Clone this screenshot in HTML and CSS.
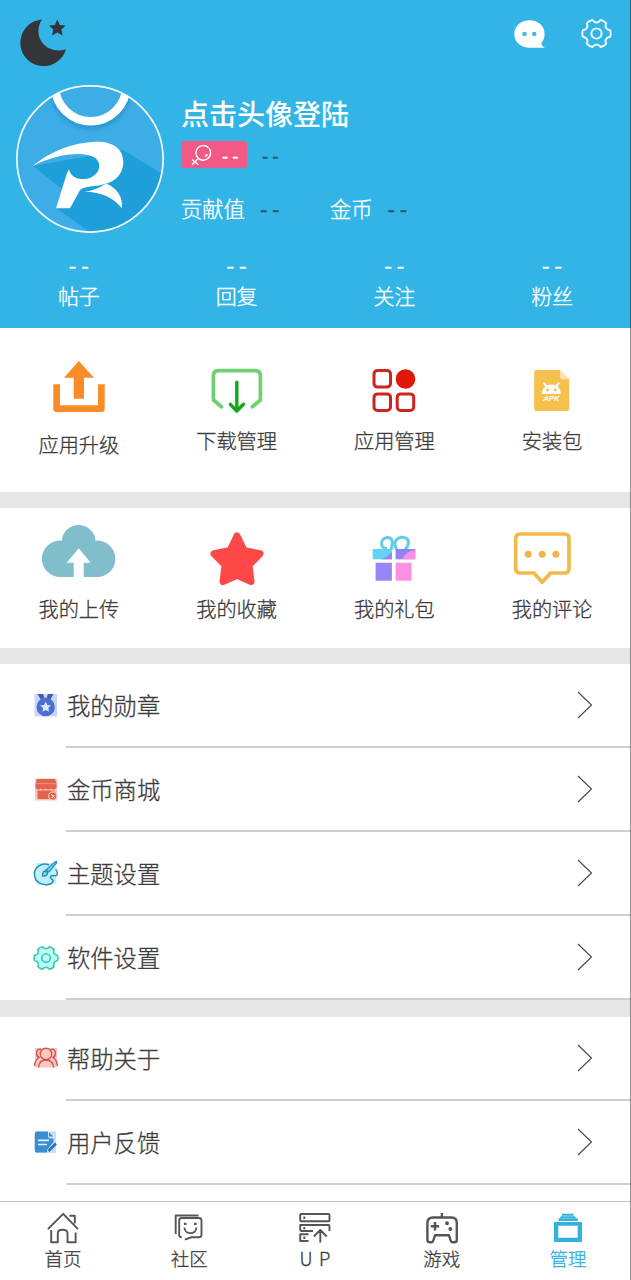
FILE: index.html
```html
<!DOCTYPE html>
<html lang="zh-CN">
<head>
<meta charset="utf-8">
<title>管理</title>
<link rel="stylesheet" href="styles.css">
</head>
<body>
<svg class="defs" width="0" height="0">
  <symbol id="gear" viewBox="-16 -16 32 32">
    <path d="M14.1 -3.3Q15.2 0 14.1 3.3Q7.8 4.5 9.9 10.6Q7.6 13.2 4.2 13.9Q0 9 -4.2 13.9Q-7.6 13.2 -9.9 10.6Q-7.8 4.5 -14.1 3.3Q-15.2 0 -14.1 -3.3Q-7.8 -4.5 -9.9 -10.6Q-7.6 -13.2 -4.2 -13.9Q0 -9 4.2 -13.9Q7.6 -13.2 9.9 -10.6Q7.8 -4.5 14.1 -3.3Z"/>
    <circle r="5.3"/>
  </symbol>
  <symbol id="chevron" viewBox="0 0 16 28">
    <path d="M1 1L14.5 14L1 27" fill="none" stroke="#444" stroke-width="1.1"/>
  </symbol>
</svg>
<div class="screen">
  <header class="header">
    <div class="topbar">
      <svg class="moon" width="48" height="50" viewBox="0 0 48 50" fill="#333538">
        <path d="M21 1.5A23.3 23.3 0 1 0 45 31.2C35 34.5 24 31 19.3 21.5C16.2 15 17 7.5 21 1.5Z"/>
        <path d="M36.3 1.5L38.8 7L44.7 7.6L40.3 11.6L41.7 17.4L36.3 14.5L31 17.4L32.3 11.6L28 7.6L33.8 7Z"/>
      </svg>
      <svg class="chat" width="32" height="30" viewBox="0 0 32 30">
        <path d="M15.5 .3C24 .3 30.6 6 30.6 13.8C30.6 18 29.2 21 27.2 23.2Q27.8 26.2 30.8 27.8H15.5C7 27.8.3 22 .3 14S7 .3 15.5.3Z" fill="#fff"/>
        <circle cx="10.5" cy="14" r="2.3" fill="#4bb5df"/><circle cx="20.3" cy="14" r="2.3" fill="#4bb5df"/>
      </svg>
      <svg class="settings" width="31" height="31"><use href="#gear"/></svg>
    </div>
    <div class="profile">
      <svg class="avatar" width="148" height="148" viewBox="0 0 148 148">
        <defs><clipPath id="round"><circle cx="74" cy="74" r="73"/></clipPath>
        <filter id="soft"><feGaussianBlur stdDeviation="1.5"/></filter></defs>
        <g clip-path="url(#round)">
          <path d="M0 0H148V148H0Z" fill="#3cade6"/>
          <path d="M17 81L46 104L40 123L78 150H150V91L107 65Z" fill="#1e9fd9"/>
          <circle cx="74.7" cy="4" r="37" fill="none" stroke="#258fca" stroke-width="8" opacity=".6" filter="url(#soft)"/>
          <circle cx="74.7" cy=".5" r="35.7" fill="#3cade6" stroke="#fff" stroke-width="8.4"/>
          <path d="M16.7 81C34 66 58 57.5 79 56.8C97 56 107 64 107.3 76C107.5 90 98 97 89 98.8C78 103 66 100 63 107L54 123.3H40L50.7 89L53 84.3C55 94 66 96 75 92.5C84 88 86 79 79.5 73C67 65 38 70 16.7 81Z" fill="#fff"/>
          <path d="M69 106.7Q80 105.5 90 98.6C101 103 107 112 106 123.3C97 112 85 107 69 106.7Z" fill="#fff"/>
        </g>
        <circle cx="74" cy="74" r="73.1" fill="none" stroke="#f4fcff" stroke-width="1.7"/>
      </svg>
      <div class="info">
        <div class="name">点击头像登陆</div>
        <div class="tags">
          <span class="badge">
            <svg width="22" height="22" viewBox="0 0 22 22" fill="none" stroke="#fff" stroke-width="1.4">
              <path d="M17.5 3.8A7.3 7.3 0 1 0 19.5 8.2M7.3 14.5L1 20.7M1 15.5L7.3 20.7M14 12.4Q16 11.5 16.3 10M18 4.2Q19.6 6 19.5 8.8"/>
            </svg>
            <span>- -</span>
          </span>
          <span class="level">- -</span>
        </div>
        <div class="wealth">
          <div class="contrib">贡献值<span class="value">- -</span></div>
          <div>金币<span class="value">- -</span></div>
        </div>
      </div>
    </div>
    <div class="stats">
      <div><b>- -</b>帖子</div><div><b>- -</b>回复</div><div><b>- -</b>关注</div><div><b>- -</b>粉丝</div>
    </div>
  </header>

  <section class="tiles tools">
    <div class="tile upgrade">
      <svg width="72" height="60" viewBox="0 0 72 60" fill="#fa8c28"><path d="M35.8 3L51 19.7H41V40.7H30.7V19.7H21ZM10.3 26.3H17V47.3H55V26.3H61.7V51Q61.7 54 58.7 54H13.3Q10.3 54 10.3 51Z"/></svg>
      <span>应用升级</span>
    </div>
    <div class="tile">
      <svg width="72" height="60" viewBox="0 0 72 60" fill="none" stroke-linecap="round" stroke-linejoin="round"><path d="M20.5 48.7L12.4 42V18Q12.4 12.7 17.7 12.7H54Q59.4 12.7 59.4 18V42L51.3 48.7" stroke="#6fcf73" stroke-width="3.7"/><path d="M35.8 24.3V52.5M29.4 46.3L35.8 53L42.4 46.3" stroke="#12a81c" stroke-width="3.4"/></svg>
      <span>下载管理</span>
    </div>
    <div class="tile">
      <svg width="72" height="60" viewBox="0 0 72 60" fill="none" stroke="#cc241e" stroke-width="3"><rect x="16" y="12.6" width="16.5" height="16.5" rx="3.5"/><rect x="16" y="35.9" width="16.5" height="16.5" rx="3.5"/><rect x="39.2" y="35.9" width="16.5" height="16.5" rx="3.5"/><circle cx="47.5" cy="21" r="9.8" fill="#e01808" stroke="none"/></svg>
      <span>应用管理</span>
    </div>
    <div class="tile">
      <svg width="72" height="60" viewBox="0 0 72 60"><path d="M20.2 12H44L53.2 21.3V51Q53.2 53 51.2 53H20.2Q18.2 53 18.2 51V14Q18.2 12 20.2 12Z" fill="#f6c04e"/><path d="M44 12L53.2 21.3H46Q44 21.3 44 19.3Z" fill="#fbe3ae"/><path d="M26 36Q26 31 29.3 28.7L26.8 25L28.2 24.3L31.2 27.2Q35.5 25.6 39.5 27.2L42.6 24.3L44 25L41.5 28.7Q44.8 31 44.8 36Z" fill="#fff"/><circle cx="31.5" cy="32" r="1.4" fill="#f6c04e"/><circle cx="39.3" cy="32" r="1.4" fill="#f6c04e"/><text class="apk" x="35.4" y="43" text-anchor="middle">APK</text></svg>
      <span>安装包</span>
    </div>
  </section>

  <section class="tiles mine">
    <div class="tile">
      <svg width="72" height="60" viewBox="0 0 72 60"><path d="M18 54A18.2 18.2 0 1 1 18.8 17.7A16.9 16.9 0 0 1 52.5 17.7A18.2 18.2 0 1 1 53.3 54H40.7V39.7H47.7L35.7 25.3L23.7 39.7H30.7V54Z" fill="#7fbeca"/></svg>
      <span>我的上传</span>
    </div>
    <div class="tile">
      <svg width="72" height="60" viewBox="0 0 72 60"><path d="M36 13L43 27.5L59 30.8L48 42L50 58.5L36 52.3L22 58.5L24 42L13 30.8L29 27.5Z" fill="#ff4848" stroke="#ff4848" stroke-width="7" stroke-linejoin="round"/></svg>
      <span>我的收藏</span>
    </div>
    <div class="tile">
      <svg width="72" height="60" viewBox="0 0 72 60"><g fill="none" stroke="#62cbe8" stroke-width="3"><path d="M33 26.5Q37 14 29 14.5C21.5 15.5 22 26 29 25.6"/><path d="M38.6 26.5C34 18 40 14 44.8 14.2C53 15 51 23 46.5 27"/></g><path d="M14.6 26H33.9V36.3H14.6Z" fill="#5fd5f3"/><path d="M22.5 36.3Q30 34 33.9 29V36.3Z" fill="#9a84f4"/><path d="M37.6 26H57.3V36.3H37.6Z" fill="#9181f2"/><path d="M57.3 27V36.3H44Q48 28 57.3 27Z" fill="#fa91df"/><path d="M17.6 39.7H33.9V57.7H17.6Z" fill="#9885f8"/><path d="M37.6 39.7H53.6V57.7H37.6Z" fill="#fa91e3"/></svg>
      <span>我的礼包</span>
    </div>
    <div class="tile">
      <svg width="72" height="60" viewBox="0 0 72 60"><path d="M4.3 11H48.5Q53 11 53 15.5V45.5Q53 50 48.5 50H34.5L26.2 59.3L18 50H4.3Q-.3 50-.3 45.5V15.5Q-.3 11 4.3 11Z" fill="none" stroke="#f1bb49" stroke-width="3.7" stroke-linejoin="round"/><g fill="#efb548"><circle cx="12.2" cy="31.2" r="3.5"/><circle cx="26.2" cy="31.2" r="3.5"/><circle cx="39.9" cy="31.2" r="3.5"/></g></svg>
      <span>我的评论</span>
    </div>
  </section>

  <section class="list">
    <div class="row">
      <svg class="row-icon" width="24" height="24" viewBox="0 0 24 24"><path d="M.5 0H23V22.5H.5Z" fill="#c5d7fb"/><path d="M3.5 0H9L10.5 4L7 6ZM14 0H19.5L16 6L12.5 4Z" fill="#445da8"/><circle cx="11.7" cy="13" r="9.2" fill="#4b6ed3"/><path d="M11.7 7.5L13.3 11L17 11.5L14.3 14L15 17.7L11.7 16L8.4 17.7L9.1 14L6.4 11.5L10.1 11Z" fill="#dce7ff"/></svg>
      <div class="row-body">我的勋章<svg width="16" height="28"><use href="#chevron"/></svg></div>
    </div>
    <div class="row">
      <svg class="row-icon" width="24" height="24" viewBox="0 0 24 24"><path d="M1 .5H23V22.5H1Z" fill="#fac7bd"/><path d="M3 1H21L22.5 5.5V10Q20 12.5 17 10.5Q14 12.5 11.7 10.5Q9 12.5 6.5 10.5Q3.5 12.5 1.5 10V5.5ZM3.5 12.3Q7 13 9 12.3Q12 13 14 12.3Q18 13 20.5 12.3V21H3.5Z" fill="#e5624f"/><path d="M2 5.7H22" stroke="#f09d8e" stroke-width=".8"/><circle cx="18.8" cy="18" r="4.1" fill="#e5624f" stroke="#ffd5cd"/><path d="M17.3 16.2L20.5 19.6M20.5 17L18 20" stroke="#fff0ed" fill="none"/></svg>
      <div class="row-body">金币商城<svg width="16" height="28"><use href="#chevron"/></svg></div>
    </div>
    <div class="row">
      <svg class="row-icon" width="24" height="24" viewBox="0 0 24 24"><path d="M2 1H19L22 5V21L17 23H4L1 19Z" fill="#bdefff"/><path d="M15 3C8 0 0 5 .5 12.5C.5 20 8 23.5 14 22.5C20 21.5 20 18 17.5 17C15 15 17.5 13 20 13.7C24 14.5 24 11 21.8 7" fill="none" stroke="#278eb8" stroke-width="1.5"/><path d="M12 8L21.5-.5Q23-1 22.5 1L15 10ZM11.5 9Q8.5 9 8.5 14Q13 14.5 13.7 11Z" fill="#78d6ed" stroke="#278eb8" stroke-width="1.3"/></svg>
      <div class="row-body">主题设置<svg width="16" height="28"><use href="#chevron"/></svg></div>
    </div>
    <div class="row">
      <svg class="row-icon theme-gear" width="26" height="26"><use href="#gear"/></svg>
      <div class="row-body">软件设置<svg width="16" height="28"><use href="#chevron"/></svg></div>
    </div>
  </section>

  <section class="list help">
    <div class="row">
      <svg class="row-icon" width="24" height="24" viewBox="0 0 24 24"><path d="M1 1H23V20.5H1Z" fill="#fac7c3"/><g fill="none" stroke="#d45450" stroke-width="1.4"><circle cx="12" cy="7" r="5.8"/><path d="M4.5 20.5Q5 13 12 13T19.5 20.5M7 2.5Q3 1.5 2.5 6Q2.5 9.5 5 10.5Q1 13 .5 19M17 2.5Q21 1.5 21.5 6Q21.5 9.5 19 10.5Q23 13 23.5 19"/></g></svg>
      <div class="row-body">帮助关于<svg width="16" height="28"><use href="#chevron"/></svg></div>
    </div>
    <div class="row">
      <svg class="row-icon" width="24" height="24" viewBox="0 0 24 24"><path d="M1 .5H22V22H1Z" fill="#c6e1f7"/><path d="M3 .5H14V5Q14 7.5 16.5 7.5H19.5V11L13 19V21.5H3Q.7 21.5.7 19V3Q.7.5 3 .5ZM15 1L19 5.5H15Z" fill="#3a8dd0"/><path d="M4 9.3H15M4 13.5H13" stroke="#e2f3ff" stroke-width="1.7"/><path d="M14.5 20L22 12.5" stroke="#2475b8" stroke-width="2.7"/></svg>
      <div class="row-body">用户反馈<svg width="16" height="28"><use href="#chevron"/></svg></div>
    </div>
  </section>

  <nav class="nav">
    <a><svg width="36" height="32" viewBox="0 0 36 32"><path d="M2.9 17.2L18.2 1.8L33 17.2M24.5 3.8H29.8V11.5M6.2 18V30.2H12.8V21Q12.8 17.7 17.5 17.7T22.5 21V30.2H30.6V20.5"/></svg>首页</a>
    <a><svg width="36" height="32" viewBox="0 0 36 32"><path d="M4.7 22V3.5H27.5M21 25.3H28Q30.5 25.3 30.5 22.8V8.5Q30.5 6 28 6H10.7Q8.2 6 8.2 8.5V22.8Q8.2 25.3 10.7 25.3M21 25L13.8 27.7M13.4 15.5C14 23 25 23 25.4 15.5"/><path d="M14.2 10.7V13M24.3 10.7V13" stroke-width="2.6"/></svg>社区</a>
    <a><svg width="36" height="32" viewBox="0 0 36 32"><rect x="3.2" y="2" width="29.3" height="7.3" rx="1"/><path d="M16 19H4.3Q3.2 19 3.2 17.5V13H31.3Q32.5 13 32.5 14.5V19M11.5 22.3H3.2V29H11.5M23.3 30.5V19M16.8 24.5L23.3 18L29.7 24.5"/><path d="M7.3 4.5V7M7.3 15V17.3M7.3 24.5V27" stroke-width="2"/></svg><span class="up">U P</span></a>
    <a><svg width="36" height="32" viewBox="0 0 36 32"><path d="M17.9 1V5.4M9 5.5H27.5Q32.8 5.5 32.8 11V28Q32.8 30.3 30 30.3H28.5Q27.2 30.3 26.5 28L25 23.3H11L9.5 28Q8.8 30.3 7.5 30.3H6Q3.4 30.3 3.4 28V11Q3.4 5.5 9 5.5Z" stroke-width="2.4"/><path d="M11 10V18.5M6.8 14.3H15.2" stroke-width="2.5"/><circle cx="23" cy="11.2" r="1" /><circle cx="26.3" cy="17" r="1"/></svg>游戏</a>
    <a class="active"><svg width="36" height="32" viewBox="0 0 36 32"><path d="M12 1.7H23.7V3.7H12ZM11 4.3H24.7L26.5 6.5H9.3ZM8.5 6.3H27.7V9H8.5ZM4 10H32V30H4ZM8.3 13.7V25.7H27.7V13.7Z" fill="#34b0dc" fill-rule="evenodd" stroke="none"/></svg>管理</a>
  </nav>
</div>
</body>
</html>
```
FILE: styles.css
```css
* { box-sizing: border-box; }
body {
  margin: 0;
  font-family: "Noto Sans CJK SC", sans-serif;
  font-weight: 300;
  -webkit-text-stroke-width: .3px;
  color: #3c3c3c;
  background: #e6e6e6;
}
svg { display: block; overflow: visible; flex: none; }
.defs { position: absolute; }
.screen {
  position: relative;
  width: 631px;
  height: 1280px;
  overflow: hidden;
  display: flex;
  flex-direction: column;
}
/* thin shade along the right edge of the window */
.screen::after {
  content: "";
  position: absolute;
  inset: 0 0 0 auto;
  width: 1px;
  background: rgba(0, 0, 0, .42);
}
.header { height: 328px; background: #33b4e6; color: #fff; flex: none; }
.topbar { display: flex; height: 85px; padding: 18px 19px 0 21px; }
.chat { margin: 2px 35px 0 auto; }
.settings { fill: none; stroke: #effaff; stroke-width: 2; }
.profile { display: flex; padding-left: 16px; height: 148px; }
.info { padding: 11px 0 0 17px; }
.name { font-size: 28px; font-weight: 500; line-height: 34px; -webkit-text-stroke-width: 0; }
.tags { display: flex; align-items: center; margin-top: 11px; font-size: 18px; font-weight: 400; }
.badge {
  display: flex;
  align-items: center;
  gap: 9px;
  width: 66px;
  height: 27px;
  padding-left: 10px;
  border-radius: 3px;
  background: #f25984;
  line-height: 24px;
  white-space: nowrap;
}
.level { margin-left: 15px; line-height: 24px; color: #1f5870; }
.wealth { display: flex; margin-top: 25px; font-size: 21.3px; line-height: 30px; }
.contrib { width: 149px; }
.value { margin-left: 15px; color: #1f5870; font-weight: 400; }
.stats { display: grid; grid-template-columns: repeat(4, 1fr); padding-top: 16px; text-align: center; font-size: 21px; line-height: 30px; }
.stats b { display: block; font-size: 22px; font-weight: 400; line-height: 31px; }
.tiles { display: grid; grid-template-columns: repeat(4, 1fr); background: #fff; flex: none; margin-bottom: 16px; }
.tile { display: flex; flex-direction: column; align-items: center; font-size: 20.2px; line-height: 30px; }
.tools { height: 164px; padding-top: 30px; }
.tools span { margin-top: 8px; }
.tools .upgrade span { margin-top: 12px; }
.mine { height: 140px; padding-top: 15px; }
.mine span { margin-top: 11px; }
.apk { font: italic 700 7.8px "Liberation Sans", sans-serif; fill: #fff; -webkit-text-stroke-width: 0; }
.list { background: #fff; flex: none; }
.row { display: grid; grid-template-columns: 66px 1fr; height: 84px; align-items: center; }
.row-icon { margin-left: 34px; }
.theme-gear { fill: #b9fff3; stroke: #3bc8b6; stroke-width: 2; margin-left: 33px; }
.row-body {
  display: flex;
  align-items: center;
  justify-content: space-between;
  height: 84px;
  padding: 0 38px 0 1px;
  border-bottom: 2px solid #cecece;
  font-size: 23.3px;
  line-height: 36px;
}
.help { margin-top: 17px; flex: 1; }
.nav { display: grid; grid-template-columns: repeat(5, 1fr); height: 79px; border-top: 1px solid #c2c4c4; background: #fff; flex: none; }
.nav a { display: flex; flex-direction: column; align-items: center; padding-top: 10px; font-size: 18.5px; line-height: 28px; }
.nav svg { fill: none; stroke: #555; stroke-width: 1.9; stroke-linejoin: round; }
.up { letter-spacing: 1.2px; }
.nav .active { color: #34b0dc; }
```
